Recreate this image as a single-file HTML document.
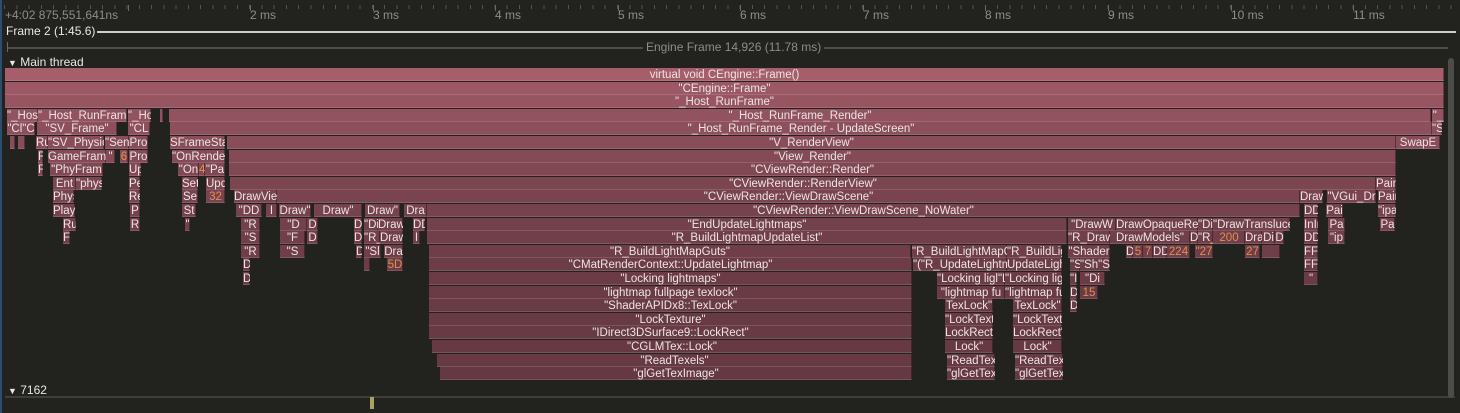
<!DOCTYPE html>
<html><head><meta charset="utf-8"><style>
body{margin:0;width:1460px;height:413px;background:#22221f;overflow:hidden;position:relative;font-family:"Liberation Sans",sans-serif}
.t{position:absolute;color:#8e8e88;font-size:12px;top:8px;white-space:nowrap}
.tk{position:absolute;top:5px;width:1px;background:#6a6a64}
.b{position:absolute;height:13px;overflow:hidden;white-space:nowrap;text-align:center;font-size:11.5px;line-height:15px;color:#ece4e4;box-shadow:inset 0 -1px 0 rgba(255,255,255,.13),inset -1px 0 0 rgba(0,0,0,.35)}
.o{color:#e08f4c}
.r0{top:68px;background:#a65e6a}.r1{top:82px;background:#9c5865}.r2{top:95px;background:#975562}
.r3{top:109px;background:#92525f}.r4{top:122px;background:#8d4f5c}.r5{top:136px;background:#884d59}
.r6{top:150px;background:#844a56}.r7{top:163px;background:#804853}.r8{top:177px;background:#7c4651}
.r9{top:190px;background:#79444f}.r10{top:204px;background:#76424d}.r11{top:218px;background:#73414b}
.r12{top:231px;background:#713f4a}.r13{top:245px;background:#6f3e48}.r14{top:258px;background:#6d3d47}
.r15{top:272px;background:#6b3c46}.r16{top:286px;background:#6a3b45}.r17{top:299px;background:#693b45}
.r18{top:313px;background:#683a44}.r19{top:326px;background:#673a44}.r20{top:340px;background:#663943}
.r21{top:354px;background:#663943}.r22{top:367px;background:#653943}
.lab{position:absolute;color:#e8e8e4;font-size:12px;white-space:nowrap}
</style></head><body>
<div style="position:absolute;left:0;top:5px;width:1460px;height:4px;background:repeating-linear-gradient(90deg,transparent 0 4px,#55554f 4px 5px,transparent 5px 12.26px)"></div>
<div class="tk" style="left:250px;height:6px"></div><div class="tk" style="left:373px;height:6px"></div><div class="tk" style="left:495px;height:6px"></div><div class="tk" style="left:618px;height:6px"></div><div class="tk" style="left:740px;height:6px"></div><div class="tk" style="left:863px;height:6px"></div><div class="tk" style="left:985px;height:6px"></div><div class="tk" style="left:1108px;height:6px"></div><div class="tk" style="left:1231px;height:6px"></div><div class="tk" style="left:1353px;height:6px"></div><div class="tk" style="left:128px;height:6px"></div>
<div class="t" style="left:5px">+4:02 875,551,641ns</div>
<div class="t" style="left:250px">2 ms</div><div class="t" style="left:373px">3 ms</div><div class="t" style="left:495px">4 ms</div><div class="t" style="left:618px">5 ms</div><div class="t" style="left:740px">6 ms</div><div class="t" style="left:863px">7 ms</div><div class="t" style="left:985px">8 ms</div><div class="t" style="left:1108px">9 ms</div><div class="t" style="left:1231px">10 ms</div><div class="t" style="left:1353px">11 ms</div>
<div style="position:absolute;left:90px;top:31px;width:1366px;height:2px;background:#cfcfc8"></div>
<div class="lab" style="left:6px;top:24px;background:#22221f;padding-right:2px">Frame 2 (1:45.6)</div>
<div style="position:absolute;left:7px;top:47px;width:1441px;height:2px;background:#4d4d48"></div>
<div style="position:absolute;left:7px;top:42px;width:1px;height:10px;background:#6a6a64"></div>
<div style="position:absolute;left:643px;top:40px;padding:0 3px;background:#22221f;color:#8d8d86;font-size:12px;white-space:nowrap">Engine Frame 14,926 (11.78 ms)</div>
<div class="lab" style="left:8px;top:55px"><span style="font-size:9px">▼</span> Main thread</div>
<div class="lab" style="left:8px;top:383px"><span style="font-size:9px">▼</span> 7162</div>
<div style="position:absolute;left:5px;top:396px;width:1450px;height:2px;background:#3e3e3a"></div>
<div style="position:absolute;left:370px;top:397px;width:4px;height:12px;background:#a9a064"></div>
<div style="position:absolute;left:0;top:0;width:2px;height:413px;background:#2d4d6d"></div>
<div style="position:absolute;left:1448px;top:58px;width:6px;height:340px;background:#4c4c48;border-radius:3px"></div>

<div class="b r0" style="left:5px;width:1439px">virtual void CEngine::Frame()</div>
<div class="b r1" style="left:5px;width:1439px">"CEngine::Frame"</div>
<div class="b r2" style="left:5px;width:1439px">"_Host_RunFrame"</div>

<div class="b r3" style="left:7px;width:31px">"_Hos</div><div class="b r3" style="left:38px;width:89px">"_Host_RunFrame"</div><div class="b r3" style="left:128px;width:23px">"_Ho</div><div class="b r3" style="left:160px;width:3px"></div><div class="b r3" style="left:169px;width:1262px">"_Host_RunFrame_Render"</div><div class="b r3" style="left:1432px;width:12px">"_</div>

<div class="b r4" style="left:7px;width:28px">"Cl"C</div><div class="b r4" style="left:37px;width:80px">"SV_Frame"</div><div class="b r4" style="left:128px;width:22px">"CL</div><div class="b r4" style="left:170px;width:1262px">"_Host_RunFrame_Render - UpdateScreen"</div><div class="b r4" style="left:1432px;width:10px">"S</div>

<div class="b r5" style="left:10px;width:5px"></div><div class="b r5" style="left:18px;width:7px"></div><div class="b r5" style="left:36px;width:12px">Ru</div><div class="b r5" style="left:48px;width:56px">"SV_Physic</div><div class="b r5" style="left:105px;width:24px">"Sen</div><div class="b r5" style="left:129px;width:19px">Pro</div><div class="b r5" style="left:170px;width:55px">SFrameSta</div><div class="b r5" style="left:227px;width:1169px">"V_RenderView"</div><div class="b r5" style="left:1396px;width:44px">SwapE</div>

<div class="b r6" style="left:38px;width:5px">F</div><div class="b r6" style="left:48px;width:58px">GameFram</div><div class="b r6" style="left:106px;width:9px">"</div><div class="b r6 o" style="left:120px;width:8px">6</div><div class="b r6" style="left:129px;width:19px">Pro</div><div class="b r6" style="left:172px;width:53px">"OnRende</div><div class="b r6" style="left:229px;width:1167px">"View_Render"</div>

<div class="b r7" style="left:38px;width:5px">F</div><div class="b r7" style="left:50px;width:53px">"PhyFram</div><div class="b r7" style="left:129px;width:12px">Up</div><div class="b r7" style="left:178px;width:21px">"On</div><div class="b r7 o" style="left:199px;width:6px">4</div><div class="b r7" style="left:205px;width:20px">"Pa</div><div class="b r7" style="left:229px;width:1167px">"CViewRender::Render"</div>

<div class="b r8" style="left:53px;width:23px">Ent</div><div class="b r8" style="left:76px;width:26px">"phys</div><div class="b r8" style="left:129px;width:11px">Pe</div><div class="b r8" style="left:182px;width:16px">Set</div><div class="b r8" style="left:206px;width:19px">Upd</div><div class="b r8" style="left:230px;width:1146px">"CViewRender::RenderView"</div><div class="b r8" style="left:1376px;width:20px">Pain</div>

<div class="b r9" style="left:53px;width:21px">Phys</div><div class="b r9" style="left:129px;width:11px">Re</div><div class="b r9" style="left:182px;width:16px">Se</div><div class="b r9 o" style="left:206px;width:19px">32</div><div class="b r9" style="left:234px;width:43px">DrawVie</div><div class="b r9" style="left:277px;width:1023px">"CViewRender::ViewDrawScene"</div><div class="b r9" style="left:1300px;width:23px">Draw</div><div class="b r9" style="left:1327px;width:49px">"VGui_Dr</div><div class="b r9" style="left:1378px;width:18px">Pain</div>

<div class="b r10" style="left:53px;width:22px">Play</div><div class="b r10" style="left:130px;width:10px">P</div><div class="b r10" style="left:182px;width:14px">St</div><div class="b r10" style="left:236px;width:26px">"DD</div><div class="b r10" style="left:266px;width:11px">I</div><div class="b r10" style="left:279px;width:32px">Draw"</div><div class="b r10" style="left:314px;width:48px">Draw"</div><div class="b r10" style="left:365px;width:35px">Draw"</div><div class="b r10" style="left:404px;width:23px">Dra</div><div class="b r10" style="left:427px;width:873px">"CViewRender::ViewDrawScene_NoWater"</div><div class="b r10" style="left:1304px;width:14px">DD</div><div class="b r10" style="left:1326px;width:17px">Pai</div><div class="b r10" style="left:1378px;width:18px">"ipa</div>

<div class="b r11" style="left:63px;width:13px">Ru</div><div class="b r11" style="left:130px;width:10px">R</div><div class="b r11" style="left:185px;width:5px">"</div><div class="b r11" style="left:241px;width:19px">"R</div><div class="b r11" style="left:280px;width:27px">"D</div><div class="b r11" style="left:307px;width:11px">D</div><div class="b r11" style="left:354px;width:8px">D</div><div class="b r11" style="left:364px;width:14px">"Di</div><div class="b r11" style="left:378px;width:25px">Draw</div><div class="b r11" style="left:413px;width:12px">DD</div><div class="b r11" style="left:427px;width:640px">"EndUpdateLightmaps"</div><div class="b r11" style="left:1068px;width:48px">"DrawW</div><div class="b r11" style="left:1116px;width:82px">DrawOpaqueRend</div><div class="b r11" style="left:1198px;width:15px">"Di</div><div class="b r11" style="left:1213px;width:77px">"DrawTransluce</div><div class="b r11" style="left:1304px;width:14px">InIn</div><div class="b r11" style="left:1328px;width:17px">Pa</div><div class="b r11" style="left:1380px;width:15px">Pa</div>

<div class="b r12" style="left:63px;width:7px">F</div><div class="b r12" style="left:241px;width:19px">"S</div><div class="b r12" style="left:280px;width:25px">"F</div><div class="b r12" style="left:307px;width:11px">D</div><div class="b r12" style="left:354px;width:8px">D</div><div class="b r12" style="left:364px;width:16px">"R_</div><div class="b r12" style="left:380px;width:23px">Draw</div><div class="b r12" style="left:413px;width:7px">I</div><div class="b r12" style="left:427px;width:640px">"R_BuildLightmapUpdateList"</div><div class="b r12" style="left:1068px;width:42px">"R_Draw</div><div class="b r12" style="left:1110px;width:80px">DrawModels"</div><div class="b r12" style="left:1190px;width:8px">D</div><div class="b r12" style="left:1198px;width:15px">"R_</div><div class="b r12 o" style="left:1213px;width:32px">200</div><div class="b r12" style="left:1245px;width:17px">Dra</div><div class="b r12" style="left:1262px;width:13px">Di</div><div class="b r12" style="left:1275px;width:9px">D</div><div class="b r12" style="left:1304px;width:14px">DD</div><div class="b r12" style="left:1328px;width:17px">"ip</div>

<div class="b r13" style="left:241px;width:19px">"R</div><div class="b r13" style="left:280px;width:25px">"S</div><div class="b r13" style="left:356px;width:6px">D</div><div class="b r13" style="left:364px;width:17px">"Sl</div><div class="b r13" style="left:384px;width:19px">Dra</div><div class="b r13" style="left:429px;width:482px">"R_BuildLightMapGuts"</div><div class="b r13" style="left:912px;width:95px">"R_BuildLightMapG</div><div class="b r13" style="left:1007px;width:55px">"R_BuildLig</div><div class="b r13" style="left:1068px;width:42px">"Shader</div><div class="b r13" style="left:1126px;width:7px">D</div><div class="b r13 o" style="left:1133px;width:10px">5</div><div class="b r13 o" style="left:1143px;width:10px">7</div><div class="b r13" style="left:1153px;width:14px">DD</div><div class="b r13 o" style="left:1167px;width:23px">224</div><div class="b r13 o" style="left:1195px;width:18px">"27</div><div class="b r13 o" style="left:1245px;width:15px">27</div><div class="b r13" style="left:1262px;width:18px"></div><div class="b r13" style="left:1304px;width:14px">FF</div>

<div class="b r14" style="left:243px;width:7px">D</div><div class="b r14" style="left:364px;width:6px"></div><div class="b r14 o" style="left:387px;width:16px">5D</div><div class="b r14" style="left:429px;width:483px">"CMatRenderContext::UpdateLightmap"</div><div class="b r14" style="left:913px;width:94px">"("R_UpdateLightm</div><div class="b r14" style="left:1007px;width:55px">UpdateLigh</div><div class="b r14" style="left:1070px;width:10px">"S</div><div class="b r14" style="left:1080px;width:30px">"Sh"Sl</div><div class="b r14" style="left:1304px;width:14px">FF</div>

<div class="b r15" style="left:243px;width:7px">D</div><div class="b r15" style="left:429px;width:483px">"Locking lightmaps"</div><div class="b r15" style="left:937px;width:68px">"Locking ligl"L</div><div class="b r15" style="left:1005px;width:57px">"Locking ligl</div><div class="b r15" style="left:1070px;width:7px">"I</div><div class="b r15" style="left:1080px;width:25px">"Di</div><div class="b r15" style="left:1304px;width:14px">"</div>

<div class="b r16" style="left:429px;width:483px">"lightmap fullpage texlock"</div><div class="b r16" style="left:937px;width:68px">"lightmap fu</div><div class="b r16" style="left:1005px;width:57px">"lightmap fu</div><div class="b r16" style="left:1070px;width:7px">D</div><div class="b r16 o" style="left:1080px;width:18px">15</div>

<div class="b r17" style="left:429px;width:483px">"ShaderAPIDx8::TexLock"</div><div class="b r17" style="left:945px;width:48px">TexLock"</div><div class="b r17" style="left:1013px;width:49px">TexLock"</div><div class="b r17" style="left:1070px;width:7px">D</div>
<div class="b r18" style="left:429px;width:483px">"LockTexture"</div><div class="b r18" style="left:945px;width:48px">"LockText</div><div class="b r18" style="left:1013px;width:49px">"LockText</div>
<div class="b r19" style="left:429px;width:483px">"IDirect3DSurface9::LockRect"</div><div class="b r19" style="left:945px;width:48px">LockRect"</div><div class="b r19" style="left:1013px;width:49px">LockRect"</div>
<div class="b r20" style="left:432px;width:480px">"CGLMTex::Lock"</div><div class="b r20" style="left:945px;width:48px">Lock"</div><div class="b r20" style="left:1013px;width:49px">Lock"</div>
<div class="b r21" style="left:437px;width:475px">"ReadTexels"</div><div class="b r21" style="left:947px;width:48px">"ReadTex</div><div class="b r21" style="left:1015px;width:48px">"ReadTex</div>
<div class="b r22" style="left:440px;width:472px">"glGetTexImage"</div><div class="b r22" style="left:947px;width:48px">"glGetTex</div><div class="b r22" style="left:1015px;width:48px">"glGetTex</div>
</body></html>
